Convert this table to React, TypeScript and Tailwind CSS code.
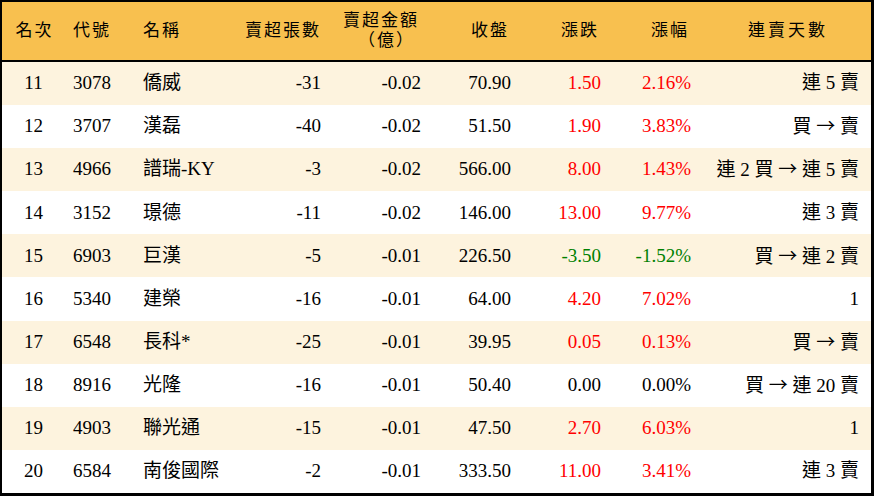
const rows = [
  { rank: 11, code: "3078", name: "僑威", qty: "-31", amt: "-0.02", close: "70.90", chg: "1.50", pct: "2.16%", dir: 1, days: "連 5 賣" },
  { rank: 12, code: "3707", name: "漢磊", qty: "-40", amt: "-0.02", close: "51.50", chg: "1.90", pct: "3.83%", dir: 1, days: "買 → 賣" },
  { rank: 13, code: "4966", name: "譜瑞-KY", qty: "-3", amt: "-0.02", close: "566.00", chg: "8.00", pct: "1.43%", dir: 1, days: "連 2 買 → 連 5 賣" },
  { rank: 14, code: "3152", name: "璟德", qty: "-11", amt: "-0.02", close: "146.00", chg: "13.00", pct: "9.77%", dir: 1, days: "連 3 賣" },
  { rank: 15, code: "6903", name: "巨漢", qty: "-5", amt: "-0.01", close: "226.50", chg: "-3.50", pct: "-1.52%", dir: -1, days: "買 → 連 2 賣" },
  { rank: 16, code: "5340", name: "建榮", qty: "-16", amt: "-0.01", close: "64.00", chg: "4.20", pct: "7.02%", dir: 1, days: "1" },
  { rank: 17, code: "6548", name: "長科*", qty: "-25", amt: "-0.01", close: "39.95", chg: "0.05", pct: "0.13%", dir: 1, days: "買 → 賣" },
  { rank: 18, code: "8916", name: "光隆", qty: "-16", amt: "-0.01", close: "50.40", chg: "0.00", pct: "0.00%", dir: 0, days: "買 → 連 20 賣" },
  { rank: 19, code: "4903", name: "聯光通", qty: "-15", amt: "-0.01", close: "47.50", chg: "2.70", pct: "6.03%", dir: 1, days: "1" },
  { rank: 20, code: "6584", name: "南俊國際", qty: "-2", amt: "-0.01", close: "333.50", chg: "11.00", pct: "3.41%", dir: 1, days: "連 3 賣" },
];

function tone(dir: number) {
  if (dir > 0) return "text-[#ff0000]";
  if (dir < 0) return "text-[#008000]";
  return "text-black";
}

// arrows look longer in the original, render them with the CJK font
function Days({ text }: { text: string }) {
  const parts = text.split("→");
  return (
    <>
      {parts.map((p, i) => (
        <span key={i}>
          {i > 0 && <span className="font-['Noto_Sans_CJK_TC']">→</span>}
          {p}
        </span>
      ))}
    </>
  );
}

export default function App() {
  return (
    <div
      className="w-[874px] h-[496px] bg-white border-black border-t-2 border-l-2 border-r-[3px] border-b-[3px] flex flex-col text-black"
      style={{ fontFamily: '"Liberation Serif", "Noto Sans CJK TC", serif' }}
    >
      {/* header */}
      <div className="flex h-[60px] shrink-0 items-center bg-[#f8c04f] text-[17px] tracking-[2px] border-b-2 border-black leading-[20px]">
        <div className="w-[63px] text-center pl-[2px]">名次</div>
        <div className="w-[70px] pl-[8px]">代號</div>
        <div className="w-[100px] pl-[8px]">名稱</div>
        <div className="w-[86px] text-right -mr-[2px]">賣超張數</div>
        <div className="w-[100px] text-right flex flex-col items-end">
          <span>賣超金額</span>
          <span className="pr-[4px]">（億）</span>
        </div>
        <div className="w-[90px] text-right">收盤</div>
        <div className="w-[90px] text-right">漲跌</div>
        <div className="w-[90px] text-right">漲幅</div>
        <div className="w-[180px] text-center pl-[18px] tracking-[3px]">連賣天數</div>
      </div>

      {/* body */}
      <div className="flex-1 flex flex-col">
        {rows.map((r, i) => (
          <div
            key={r.rank}
            className={`flex flex-1 items-center text-[19px] ${i % 2 === 0 ? "bg-[#fdf3de]" : "bg-white"}`}
          >
            <div className="w-[63px] text-center">{r.rank}</div>
            <div className="w-[70px] pl-[8px]">{r.code}</div>
            <div className="w-[100px] pl-[8px] whitespace-nowrap">{r.name}</div>
            <div className="w-[86px] text-right">{r.qty}</div>
            <div className="w-[100px] text-right">{r.amt}</div>
            <div className="w-[90px] text-right">{r.close}</div>
            <div className={`w-[90px] text-right ${tone(r.dir)}`}>{r.chg}</div>
            <div className={`w-[90px] text-right ${tone(r.dir)}`}>{r.pct}</div>
            <div className="w-[180px] text-right pr-[12px] whitespace-nowrap">
              <Days text={r.days} />
            </div>
          </div>
        ))}
      </div>
    </div>
  );
}
